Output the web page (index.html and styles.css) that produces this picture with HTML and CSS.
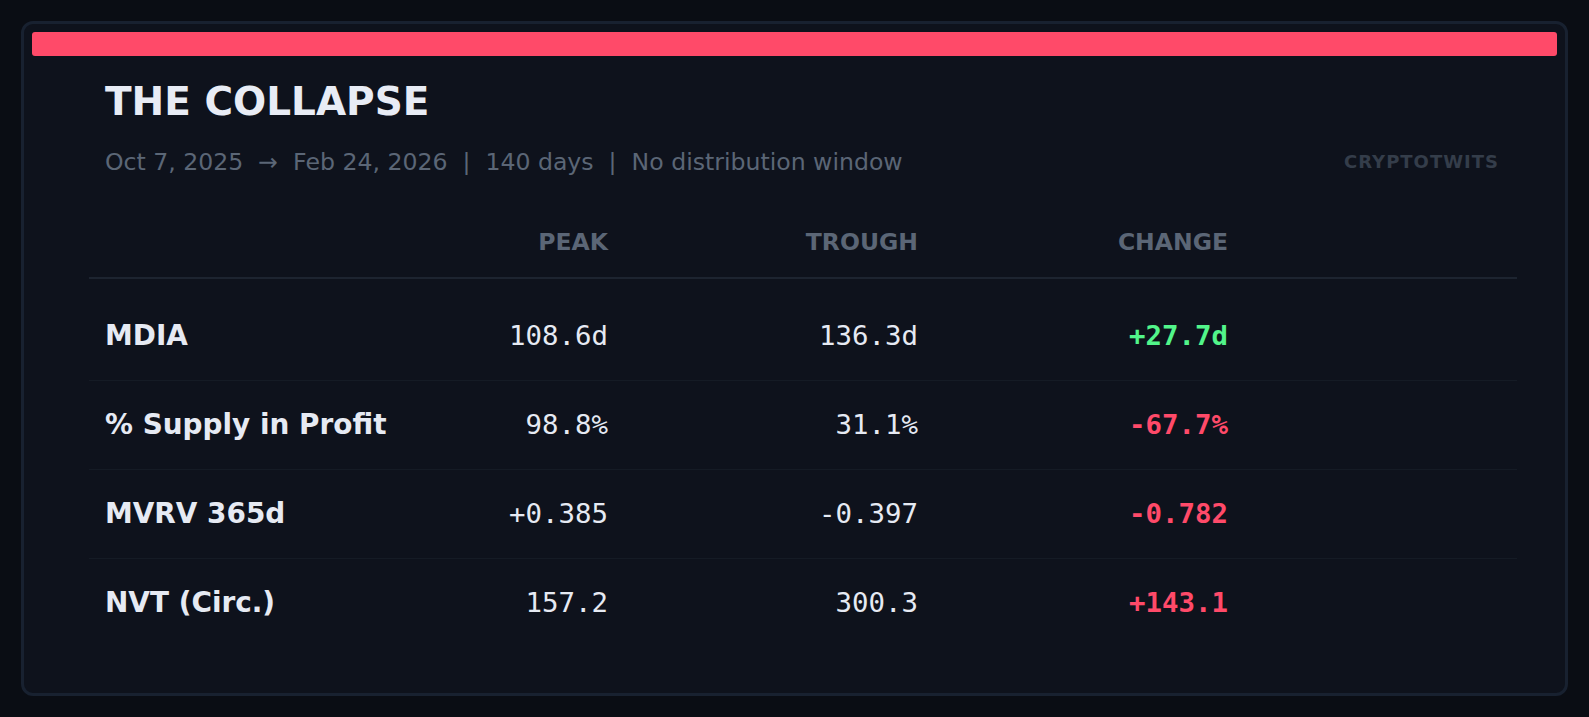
FILE: index.html
```html
<!DOCTYPE html>
<html lang="en">
<head>
<meta charset="utf-8">
<title>The Collapse</title>
<link rel="stylesheet" href="styles.css">
</head>
<body>
  <main class="card">
    <div class="accent-bar"></div>
    <div class="content">
      <header class="head">
        <h1 class="title">THE COLLAPSE</h1>
        <div class="sub-row">
          <p class="subtitle">Oct 7, 2025  →  Feb 24, 2026  |  140 days  |  No distribution window</p>
          <span class="brand">CRYPTOTWITS</span>
        </div>
      </header>
      <section class="table">
        <div class="row row-head">
          <span class="cell label"></span>
          <span class="cell num">PEAK</span>
          <span class="cell num">TROUGH</span>
          <span class="cell num">CHANGE</span>
          <span class="cell"></span>
        </div>
        <div class="tbody">
          <div class="row">
            <span class="cell label">MDIA</span>
            <span class="cell num val">108.6d</span>
            <span class="cell num val">136.3d</span>
            <span class="cell num val chg up">+27.7d</span>
            <span class="cell"></span>
          </div>
          <div class="row">
            <span class="cell label">% Supply in Profit</span>
            <span class="cell num val">98.8%</span>
            <span class="cell num val">31.1%</span>
            <span class="cell num val chg down">-67.7%</span>
            <span class="cell"></span>
          </div>
          <div class="row">
            <span class="cell label">MVRV 365d</span>
            <span class="cell num val">+0.385</span>
            <span class="cell num val">-0.397</span>
            <span class="cell num val chg down">-0.782</span>
            <span class="cell"></span>
          </div>
          <div class="row">
            <span class="cell label">NVT (Circ.)</span>
            <span class="cell num val">157.2</span>
            <span class="cell num val">300.3</span>
            <span class="cell num val chg down">+143.1</span>
            <span class="cell"></span>
          </div>
        </div>
      </section>
    </div>
  </main>
</body>
</html>
```

FILE: styles.css
```css
* { box-sizing: border-box; }

html, body {
  margin: 0;
  height: 100%;
}

body {
  background: #0a0d14;
  padding: 21px;
  display: flex;
  font-family: "DejaVu Sans", "Liberation Sans", sans-serif;
}

.card {
  flex: 1;
  background: #0e121c;
  border: 3px solid #182130;
  border-radius: 12px;
  padding: 8px;
  display: flex;
  flex-direction: column;
}

.accent-bar {
  height: 24px;
  background: #ff4a69;
  border-radius: 3px;
  flex: none;
}

.content {
  margin: 0 40px 0 57px;
}

.head {
  padding: 26px 16px 0;
}

.title {
  margin: 0;
  font-size: 39px;
  line-height: 39px;
  font-weight: 700;
  color: #e8ecf5;
}

.sub-row {
  margin-top: 29px;
  display: flex;
  align-items: center;
  justify-content: space-between;
}

.subtitle {
  margin: 0;
  font-size: 23.6px;
  line-height: 24px;
  color: #5b6676;
  white-space: pre;
}

.brand {
  font-size: 18px;
  line-height: 18px;
  font-weight: 700;
  letter-spacing: 1px;
  color: #343d4a;
  margin-right: 2px;
}

.table {
  margin-top: 57px;
}

.row {
  display: grid;
  grid-template-columns: 300px 203px 310px 310px 1fr;
  align-items: center;
  padding: 0 16px;
  height: 89px;
  border-bottom: 1px solid #151b25;
}

.row:last-child {
  border-bottom: none;
  height: 88px;
}

.row-head {
  height: auto;
  padding-bottom: 22px;
  border-bottom: 2px solid #1d2430;
}

.row-head .cell {
  font-size: 23.5px;
  line-height: 23.5px;
  font-weight: 700;
  color: #5b6676;
}

.tbody {
  padding-top: 13px;
}

.label {
  font-size: 27.9px;
  line-height: 28px;
  font-weight: 700;
  color: #e6eaf3;
  white-space: nowrap;
}

.num {
  text-align: right;
}

.val {
  font-family: "DejaVu Sans Mono", "Liberation Mono", monospace;
  font-size: 27.4px;
  line-height: 28px;
  color: #e6eaf3;
}

.chg {
  font-weight: 700;
}

.up { color: #52f58a; }
.down { color: #ff4a69; }
```
